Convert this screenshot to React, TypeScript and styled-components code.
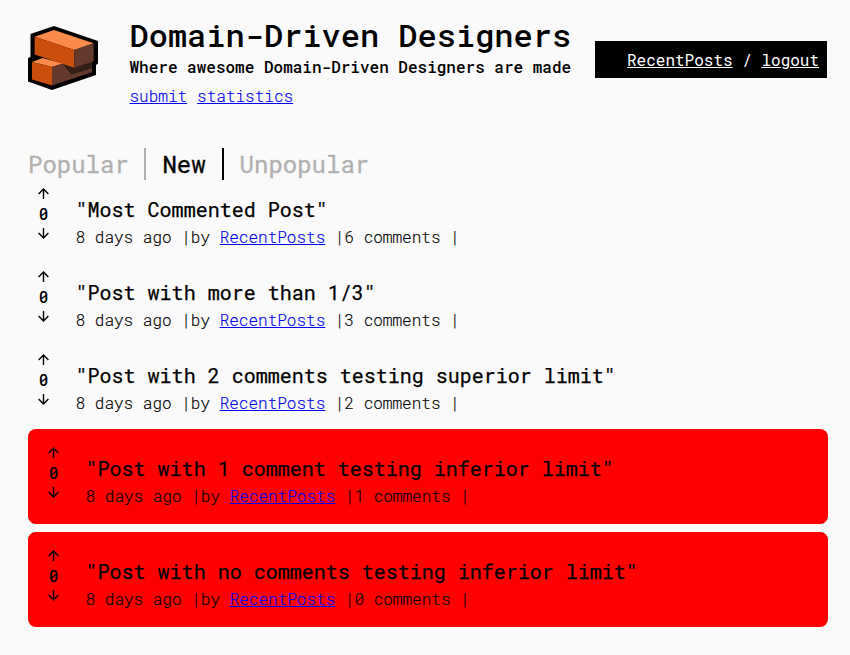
import React from "react";
import styled, { createGlobalStyle } from "styled-components";

const GlobalStyle = createGlobalStyle`
  * { box-sizing: border-box; }
  body {
    margin: 0;
    background: #fafafa;
    color: #000;
    font-family: "Roboto Mono", "DejaVu Sans Mono", monospace;
    font-size: 16px;
    line-height: 21px;
  }
  h1, h2, p { margin: 0; font-weight: 500; }
`;

const Page = styled.div`
  width: 850px;
  height: 655px;
  padding: 14px 22px 0 28px;
`;

const Header = styled.header`
  display: flex;
  align-items: flex-start;
  height: 134px;
`;

const Logo = styled.svg`
  flex: none;
  width: 70px;
  height: 64px;
  margin-top: 12px;
`;

const Brand = styled.div`
  flex: none;
  width: 443px;
  margin-left: 31.5px;
  white-space: nowrap;
`;

const Name = styled.h1`
  font-size: 32px;
  line-height: 42px;
`;

const Tagline = styled.p``;

const Links = styled.nav`
  display: flex;
  gap: 10px;
  margin-top: 8px;
  font-weight: 300;
  -webkit-text-stroke: 0.15px;
`;

const Link = styled.a`
  color: #0000ee;
  text-decoration: underline;
`;

const UserBar = styled.div`
  flex: none;
  width: 232px;
  margin: 27px 0 0 22.5px;
  padding: 8px 8px 8px 32px;
  background: #000;
  white-space: pre;
  color: #fff;
  a { color: #fff; }
`;

const Tabs = styled.div`
  display: flex;
  height: 32px;
  font-size: 24px;
  line-height: 32px;
`;

const Tab = styled.div<{ $active?: boolean }>`
  padding: 0 16px;
  color: ${(p) => (p.$active ? "#000" : "#b0b0b0")};
  border-right: 2px solid currentColor;
  font-weight: 400;
  -webkit-text-stroke: 0.3px;
  &:first-child { width: 118.4px; padding: 0; }
  &:last-child { border-right: 0; }
`;

const List = styled.main`
  display: flex;
  flex-direction: column;
  gap: 8px;
  width: 800px;
`;

const Row = styled.article<{ $flagged: boolean }>`
  display: flex;
  height: ${(p) => (p.$flagged ? 95 : 75)}px;
  padding: ${(p) => (p.$flagged ? 10 : 0)}px;
  border-radius: 8px;
  background: ${(p) => (p.$flagged ? "#f00" : "transparent")};
`;

const Votes = styled.div`
  display: flex;
  flex-direction: column;
  align-items: center;
  width: 31px;
  padding-top: 8px;
  font-weight: 500;
`;

const Count = styled.span`
  margin: 4px 0;
`;

const ArrowSvg = styled.svg`
  display: block;
  width: 11px;
  height: 11px;
`;

const Body = styled.div`
  margin-left: 16.6px;
  padding-top: 16px;
`;

const Title = styled.h2`
  font-size: 20px;
  line-height: 26px;
  font-weight: 400;
  -webkit-text-stroke: 0.25px;
`;

const Meta = styled.p`
  margin-top: 4px;
  font-weight: 300;
  -webkit-text-stroke: 0.15px;
  white-space: pre;
`;

const Arrow = ({ down = false }: { down?: boolean }) => (
  <ArrowSvg viewBox="0 0 11 11" fill="none" stroke="#000" strokeWidth="1.4">
    <path d={down ? "M5.5 0V10M0.6 5.1L5.5 10L10.4 5.1" : "M5.5 11V1M0.6 5.9L5.5 1L10.4 5.9"} />
  </ArrowSvg>
);

const posts = [
  { title: "Most Commented Post", comments: 6 },
  { title: "Post with more than 1/3", comments: 3 },
  { title: "Post with 2 comments testing superior limit", comments: 2 },
  { title: "Post with 1 comment testing inferior limit", comments: 1, flagged: true },
  { title: "Post with no comments testing inferior limit", comments: 0, flagged: true },
];

export default function App() {
  return (
    <Page>
      <GlobalStyle />
      <Header>
        <Logo viewBox="0 0 70 64">
          <path d="M26 0L70 15V37.5L68 39V49L24 64L0 55.5V32L2.5 31V8Z" fill="#000" />
          <path d="M4 36L14.5 32L35 37.5L24 41Z" fill="#fb8b4b" />
          <path d="M4 36L24 41V59.5L4 53.5Z" fill="#cb4f0a" />
          <path d="M24 41L35 37.5L43.5 48.3L64 42V46.3L24 59.5Z" fill="#633a2c" />
          <path d="M35 37.5L64 35V42L43.5 48.3Z" fill="#341f16" />
          <path d="M6.7 10.7L26 4L65.7 17.3L46.3 24Z" fill="#fb8b4b" />
          <path d="M6.7 10.7L46.3 24V41.7L6.7 28.5Z" fill="#cb4f0a" />
          <path d="M46.3 24L65.7 17.3V35.3L46.3 41.7Z" fill="#633a2c" />
        </Logo>
        <Brand>
          <Name>Domain-Driven Designers</Name>
          <Tagline>Where awesome Domain-Driven Designers are made</Tagline>
          <Links>
            <Link>submit</Link>
            <Link>statistics</Link>
          </Links>
        </Brand>
        <UserBar>
          <Link>RecentPosts</Link> / <Link>logout</Link>
        </UserBar>
      </Header>
      <Tabs>
        <Tab>Popular</Tab>
        <Tab $active>New</Tab>
        <Tab>Unpopular</Tab>
      </Tabs>
      <List>
        {posts.map((post) => (
          <Row key={post.title} $flagged={!!post.flagged}>
            <Votes>
              <Arrow />
              <Count>0</Count>
              <Arrow down />
            </Votes>
            <Body>
              <Title>"{post.title}"</Title>
              <Meta>
                8 days ago |by <Link>RecentPosts</Link> |{post.comments} comments |
              </Meta>
            </Body>
          </Row>
        ))}
      </List>
    </Page>
  );
}
